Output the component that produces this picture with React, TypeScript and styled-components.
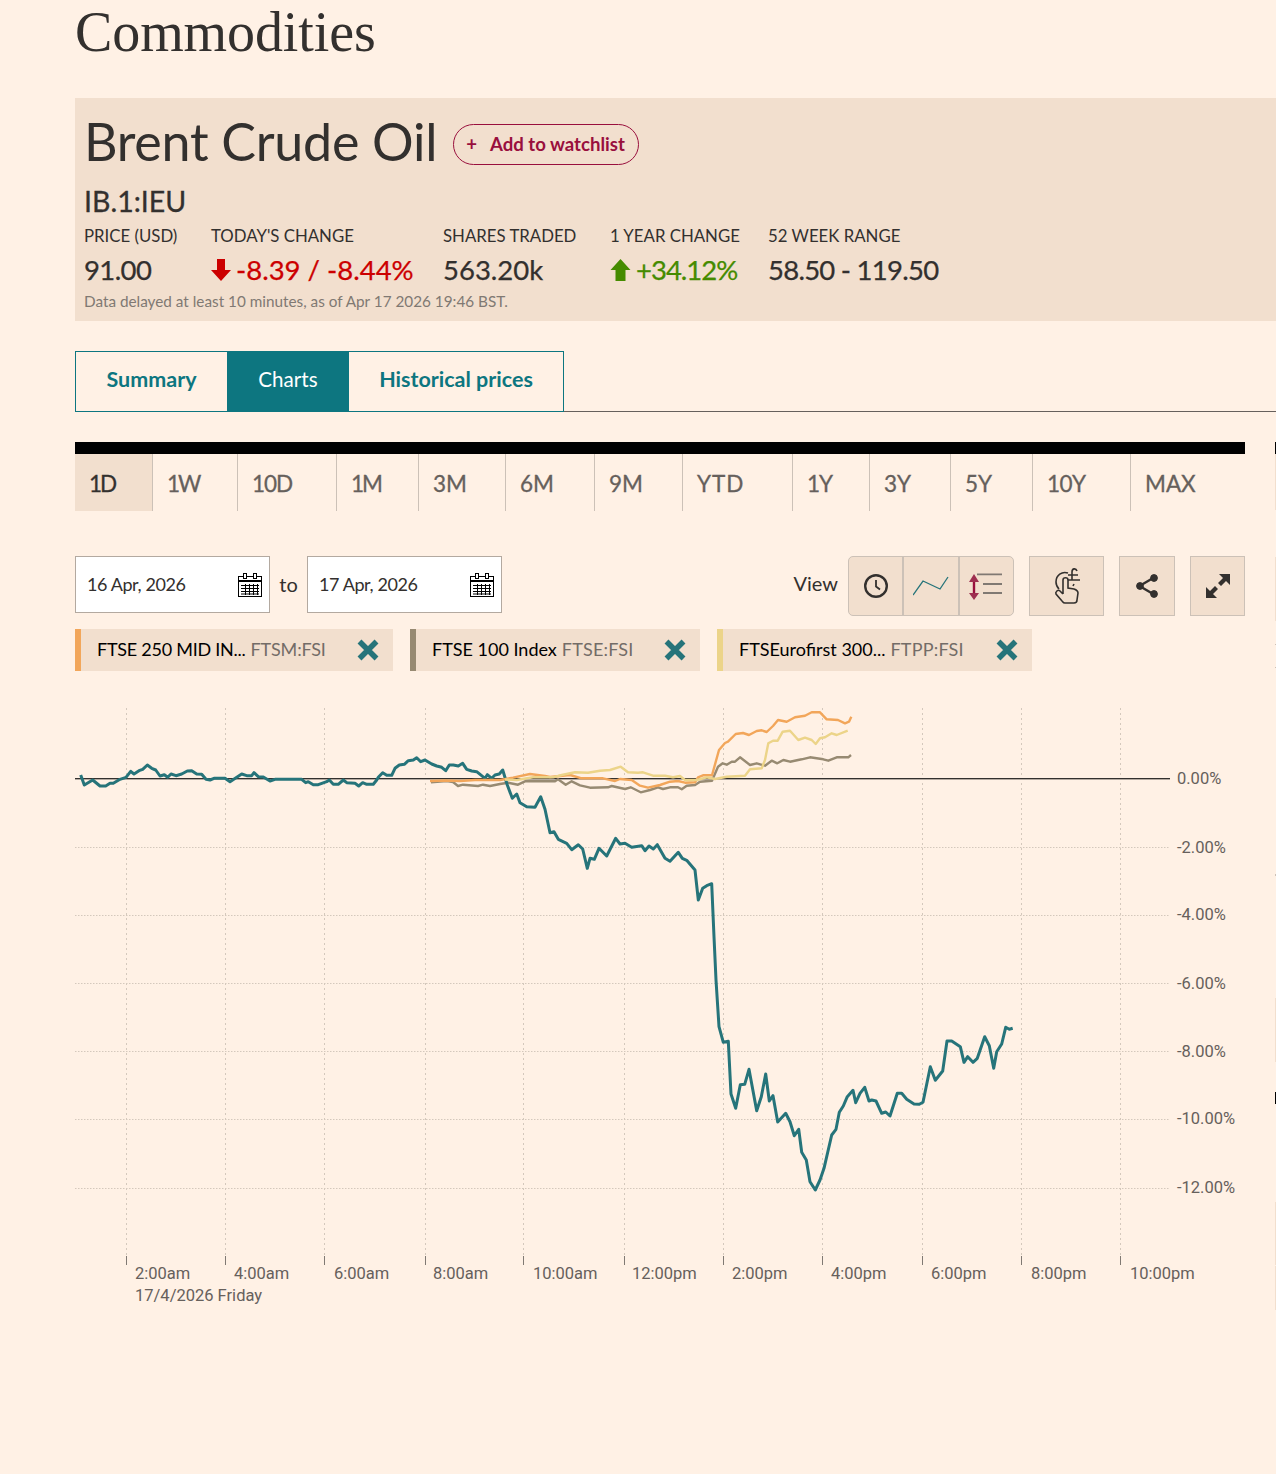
import React from 'react';
import styled, { createGlobalStyle } from 'styled-components';

const GlobalStyle = createGlobalStyle`
  html, body { margin: 0; padding: 0; background: #fff1e5; }
  body { font-family: "Lato", "Open Sans", sans-serif; color: #33302e; overflow-x: hidden; }
`;

const Page = styled.div`
  position: relative;
  width: 1276px;
  height: 1474px;
  overflow: hidden;
  box-sizing: border-box;
  padding-left: 75px;
`;

const Sliver = styled.div<{ $top: number; $height: number; $color: string }>`
  position: absolute;
  right: 0;
  width: 1px;
  top: ${p => p.$top}px;
  height: ${p => p.$height}px;
  background: ${p => p.$color};
`;

const PageTitle = styled.h1`
  margin: 0;
  height: 98px;
  font-family: "Liberation Serif", serif;
  font-weight: 400;
  font-size: 56px;
  letter-spacing: -0.1px;
  line-height: 64px;
  color: #33302e;
`;

const QuoteHeader = styled.section`
  height: 223px;
  background: #f2dfce;
  box-sizing: border-box;
  padding: 14px 0 0 9px;
`;

const NameRow = styled.div`
  display: flex;
  align-items: center;
  gap: 16px;
  height: 60px;
`;

const Name = styled.h2`
  margin: -2px 0 0;
  font-family: "Lato", sans-serif;
  font-weight: 400;
  font-size: 52px;
  letter-spacing: -0.27px;
  line-height: 60px;
`;

const Watchlist = styled.button`
  height: 41px;
  width: 186px;
  margin-top: 4px;
  box-sizing: border-box;
  border: 1px solid #990f3d;
  border-radius: 21px;
  background: transparent;
  color: #990f3d;
  font-family: "Lato", sans-serif;
  font-weight: 700;
  font-size: 18.6px;
  padding: 0 12px;
  display: flex;
  align-items: center;
  gap: 13px;
  white-space: nowrap;
`;

const Symbol = styled.div`
  font-size: 28.5px;
  line-height: 36px;
  margin-top: 11px;
  -webkit-text-stroke: 0.3px #33302e;
`;

const Stats = styled.div`
  display: flex;
  margin-top: 5px;
`;

const Stat = styled.div<{ $width: number }>`
  width: ${p => p.$width}px;
  flex: none;
`;

const StatLabel = styled.div`
  font-size: 16.8px;
  line-height: 24px;
  white-space: nowrap;
`;

const StatValue = styled.div<{ $tone?: string; $track?: number }>`
  font-size: 27.5px;
  letter-spacing: ${p => p.$track ?? 0}px;
  line-height: 34px;
  margin-top: 5px;
  color: ${p => p.$tone || '#33302e'};
  -webkit-text-stroke: 0.25px ${p => p.$tone || '#33302e'};
  display: flex;
  align-items: center;
  gap: 5px;
  white-space: nowrap;
`;

const Delay = styled.div`
  font-size: 15.3px;
  line-height: 18px;
  color: #807973;
  margin-top: 5px;
`;

const Tabs = styled.div`
  margin-top: 30px;
  height: 61px;
  box-sizing: border-box;
  display: flex;
  border-bottom: 1px solid #66605c;
`;

const Tab = styled.div<{ $active?: boolean; $width: number }>`
  width: ${p => p.$width}px;
  height: 61px;
  box-sizing: border-box;
  padding-bottom: 5px;
  display: flex;
  align-items: center;
  justify-content: center;
  font-size: ${p => (p.$active ? 20.6 : 21.5)}px;
  font-weight: ${p => (p.$active ? 400 : 700)};
  color: ${p => (p.$active ? '#fff' : '#0d7680')};
  background: ${p => (p.$active ? '#0d7680' : 'transparent')};
  border: 1px solid #0d7680;
  border-left-width: ${p => (p.$active ? 0 : 1)}px;
  border-right-width: ${p => (p.$active ? 0 : 1)}px;
  &:first-child { border-right-width: 0; }
  &:last-child { border-left-width: 0; }
`;

const Periods = styled.div`
  margin-top: 30px;
  width: 1170px;
  border-top: 12px solid #000;
  display: flex;
  height: 69px;
  box-sizing: border-box;
`;

const Period = styled.div<{ $active?: boolean; $width: number; $track: number }>`
  width: ${p => p.$width}px;
  height: 57px;
  box-sizing: border-box;
  padding: 2px 0 0 14px;
  display: flex;
  align-items: center;
  font-size: 22.5px;
  letter-spacing: ${p => p.$track}px;
  -webkit-text-stroke: 0.3px ${p => (p.$active ? '#33302e' : '#66605c')};
  color: ${p => (p.$active ? '#33302e' : '#66605c')};
  background: ${p => (p.$active ? '#f2dfce' : 'transparent')};
  border-right: 1px solid #ccc1b7;
  &:last-child { border-right: none; }
`;

const Toolbar = styled.div`
  margin-top: 45px;
  width: 1170px;
  height: 60px;
  display: flex;
  align-items: flex-start;
`;

const DateBox = styled.div`
  width: 195px;
  height: 57px;
  box-sizing: border-box;
  background: #fff;
  border: 1px solid #b3a9a0;
  padding: 0 7px 0 11px;
  display: flex;
  align-items: center;
  justify-content: space-between;
  font-size: 18px;
  letter-spacing: -0.4px;
`;

const DateText = styled.span`
  padding-bottom: 2px;
`;

const To = styled.span`
  width: 37px;
  height: 57px;
  display: flex;
  align-items: center;
  justify-content: center;
  font-size: 20px;
  padding-bottom: 2px;
  box-sizing: border-box;
`;

const ViewLabel = styled.span`
  margin-left: auto;
  margin-right: 10px;
  height: 57px;
  box-sizing: border-box;
  padding-bottom: 3px;
  display: flex;
  align-items: center;
  font-size: 20px;
`;

const ViewGroup = styled.div`
  display: flex;
  width: 166px;
  height: 60px;
  box-sizing: border-box;
  background: #f2dfce;
  border: 1px solid #ccc1b7;
  border-radius: 5px;
  margin-right: 15px;
`;

const ViewButton = styled.div`
  flex: 1;
  display: flex;
  align-items: center;
  justify-content: center;
  & + & { border-left: 2px solid #ccc1b7; }
`;

const ToolButton = styled.div<{ $width: number; $gap: number }>`
  width: ${p => p.$width}px;
  height: 60px;
  box-sizing: border-box;
  margin-right: ${p => p.$gap}px;
  background: #f2dfce;
  border: 1px solid #ccc1b7;
  display: flex;
  align-items: center;
  justify-content: center;
`;

const Chips = styled.div`
  display: flex;
  gap: 17px;
  margin-top: 13px;
`;

const Chip = styled.div<{ $color: string; $width: number }>`
  width: ${p => p.$width}px;
  height: 42px;
  box-sizing: border-box;
  background: #f2dfce;
  border-left: 6px solid ${p => p.$color};
  padding: 0 14px 0 16px;
  display: flex;
  align-items: center;
  font-size: 18px;
  color: #000;
  white-space: nowrap;
`;

const ChipName = styled.span<{ $track?: number }>`
  padding-bottom: 2px;
  letter-spacing: ${p => p.$track ?? 0}px;
`;

const ChipSymbol = styled.span<{ $track?: number }>`
  color: #736c67;
  margin-left: 5px;
  letter-spacing: ${p => p.$track ?? 0.2}px;
  padding-bottom: 2px;
`;

const ChipClose = styled.span`
  margin-left: auto;
  display: flex;
`;

const ChartSvg = styled.svg`
  display: block;
  margin: 0 0 0 -75px;
`;

const AxisText = styled.text`
  font-family: "Roboto", sans-serif;
  font-size: 16.5px;
  fill: #66605c;
`;

const teal = '80.7,775 84.3,785 92.7,780 100,786 105.7,786 110,783.3 113.3,783.3 120,779.3 126,777.3 130.7,771.3 134,774 139,770.7 142.7,769.3 147.3,765 151.7,768.3 155.7,770 160,776 164.3,774.7 167.7,777.3 171,774 176,775.7 181.7,774 187.3,771 191.7,770.7 196.7,774 201.7,774.3 206,779.3 210,780 214,778.3 225,778.3 230,781.7 241.7,774 246.7,775.7 251.7,775.7 254,772.7 258.3,776.7 263.3,777 270,781 275,779.3 301.7,779.3 305.7,782.7 308.3,781.7 313.3,784.7 318.3,784.7 326.7,781.7 329.3,780 333.3,784.3 338.3,784.3 343.3,780 346.7,782.7 355,783.3 358.7,786 362.7,782.7 366.7,784.3 373.3,784.3 376.7,780 378.3,777.3 382.7,772.7 386.7,775.3 391.7,775.3 395,768.3 399.3,765 404.3,764.3 408.3,760.7 413.3,760 416.7,757.7 420.7,761.7 425,760 431.7,764 436.7,766 441.7,767.3 445.7,770.7 449.3,765 453.3,765 458.3,766 462.7,763.3 466.7,769.3 471.7,771 476.7,771.7 485,778.3 487.3,774.7 491.7,778.3 495,775 499.3,774 502.7,770 507.3,785 512.3,798.3 516.7,794 520,802.7 526.7,806.7 535,807.3 540.7,796.7 545,809.3 550,832.7 554,831.7 558.3,839.3 566.7,843.3 571.7,849.7 578.3,844.7 582.7,849 587.3,868.3 590,858.3 594.3,859.3 599,848.3 606.7,856 615.7,838.3 620,844 625,843.3 631.7,847.3 641.7,845.7 645,850.7 649,846 653.3,849 657.3,844.7 665,858.3 670,861.3 678.3,852.3 682.3,858.3 686.7,860.3 695,870 698.3,900 702.7,888.3 706.7,885.7 711.7,883.7 714,936.7 716,980 719,1026.7 723.3,1042.3 728.3,1041.3 731,1094 735.7,1108.3 740.3,1084.7 744.7,1084.3 749,1069.3 756.7,1110.7 761.3,1096.7 765.7,1074 769.3,1101 773,1095.7 777.7,1122 785.7,1113.3 790,1121.7 794.3,1135.7 798.7,1129.3 801.7,1152.3 806.3,1160 810,1181.7 815.3,1190 820,1180 824,1168.3 831.7,1135 836,1129.3 839.3,1112.3 843.3,1106 847.3,1096.7 853,1090.3 855.7,1102.7 860,1093.3 864.7,1087.3 869,1101 871.7,1100 876,1101 881.7,1113.3 885.7,1112 890,1116 897.3,1093.3 901.7,1093.3 906.7,1099.3 914,1104 919.3,1104.3 923,1102.3 930.3,1066.7 935.3,1080.3 942.7,1071 947,1041 951.7,1041 960.3,1046.7 964,1062.3 967.7,1056.7 973,1062.3 977.3,1058.3 984.7,1036.7 989.3,1045.7 993.7,1068.3 996.7,1051.7 1001.7,1044 1005.7,1027.3 1009.3,1029.3 1012.7,1028.3';

const orange = '430,781 445,780.5 460,781 475,780 490,780 500,780 513,777.7 530,774 545,776 550,777 570,775 581.7,778.3 603,778.3 615,781 620,779 631.7,780 640,785.7 648,787.7 660,785 670,781.7 678,781 685,782.7 695,782.3 698,777.3 703,775.3 712,775.3 719,750 725,743 728,741.7 735.7,734 743,733 749,735 756.7,731 761.7,730.3 766.7,732 773,726 778,720 786.7,721.7 795,717.3 805,715.7 811.7,712.3 820,712.3 826.7,719.3 838,720 845,723.3 849,721.7 851.3,716.7';

const yellow = '505,779.5 516.7,780 533,777.3 553,777.3 561.7,775 575,772.3 588,772.7 600,770.7 610,770 620.7,766.7 628,772.3 638,772.7 643,772.3 653,775.7 665,775.7 673,777.3 680,776 685,780 696.7,780 706.7,777.3 715,779 726.7,776.7 745,775.7 750,769.3 761.7,768.3 765,760 768.3,743.3 773,740.7 777.7,740.7 782.7,731.7 790,730.7 798.3,740 805,737.7 811.7,740 815.7,744 820,738.3 825,737.3 831.7,733.3 836.7,735 847.7,730.7';

const brown = '431,782.3 446.7,781 453,782 458,786 463,784.7 478,786 483,784.7 490,786 500,784 508,782.7 518,784.7 525,781.3 555,781.3 558,779.3 565.7,784.7 571.7,781.3 580,785.3 590,787.7 608,787.3 611.7,786 625,789 630.7,787.3 640.7,792.3 650,790 658,787.3 663,789 670,787.3 678,787.3 681.7,789.3 686.7,785.7 695,785 700,781.7 712,780.7 718,766.7 722.7,763.3 726.7,764.7 731.7,761.7 735,761.7 740,757.3 750,765 756.7,763.3 765,765.7 771.7,760.7 777.3,763.3 783.3,760 790,761.7 801.7,759.3 810,757.3 823.3,759.3 828.3,760.7 836.7,757.3 848.3,757.3 851,755';

const gridX = [126.5, 225.5, 324.5, 425.5, 523.5, 624.5, 723.5, 822.5, 922.5, 1021.5, 1120.5];
const timeLabels: [string, number][] = [
  ['2:00am', 135], ['4:00am', 234], ['6:00am', 334], ['8:00am', 433], ['10:00am', 533], ['12:00pm', 632],
  ['2:00pm', 732], ['4:00pm', 831], ['6:00pm', 931], ['8:00pm', 1031], ['10:00pm', 1130],
];
const gridY: [number, string, number][] = [
  [847.5, '-2.00%', 853],
  [915.5, '-4.00%', 920],
  [983.5, '-6.00%', 989],
  [1051.5, '-8.00%', 1057],
  [1119.5, '-10.00%', 1124],
  [1188.5, '-12.00%', 1193],
];

const periods: [string, number, number][] = [
  ['1D', 78, -2], ['1W', 85, -2], ['10D', 99, -1], ['1M', 82, -2], ['3M', 87, 0], ['6M', 89, 0], ['9M', 88, 0],
  ['YTD', 110, 1], ['1Y', 77, -1], ['3Y', 81, 0], ['5Y', 82, 0], ['10Y', 98, -0.5], ['MAX', 114, 0],
];

const slivers: [number, number, string][] = [
  [442, 12, '#000'],
  [454, 56, '#f2dfce'],
  [557, 64, '#f2dfce'],
  [644, 1, '#ccc1b7'],
  [667, 1, '#ccc1b7'],
  [874, 2, '#ccc1b7'],
  [998, 64, '#f2dfce'],
  [1092, 12, '#000'],
  [1202, 63, '#f2dfce'],
  [1266, 44, '#f2dfce'],
];

const CalendarIcon = () => (
  <svg width="24" height="24" viewBox="0 0 24 24" fill="none" stroke="#000" strokeWidth="1">
    <rect x="0.5" y="3.5" width="23" height="20" fill="#fff" />
    <path d="M1 8h22" strokeWidth="2" />
    <path d="M3 12.5h18M3 15.5h18M3 18.5h18M3 21h18M7.5 11v11M11.5 11v11M15.5 11v11M19.5 11v11" />
    <rect x="5.5" y="0.5" width="3" height="5" fill="#fff" />
    <rect x="15.5" y="0.5" width="3" height="5" fill="#fff" />
  </svg>
);

const CloseIcon = () => (
  <svg width="22" height="22" viewBox="0 0 22 22">
    <path d="M2.5 2.5l17 17M19.5 2.5l-17 17" stroke="#26747a" strokeWidth="5.5" />
  </svg>
);

const DownArrow = () => (
  <svg width="20" height="24" viewBox="0 0 20 24">
    <path d="M6 1h8v11h6L10 23 0 12h6z" fill="#cc0000" />
  </svg>
);

const UpArrow = () => (
  <svg width="21" height="24" viewBox="0 0 20 24">
    <path d="M10 1l10 11h-5v11H5V12H0z" fill="#458b00" />
  </svg>
);

export default function App() {
  return (
    <Page>
      <GlobalStyle />
      {slivers.map(([top, height, color]) => (
        <Sliver key={top} $top={top} $height={height} $color={color} />
      ))}
      <PageTitle>Commodities</PageTitle>
      <QuoteHeader>
        <NameRow>
          <Name>Brent Crude Oil</Name>
          <Watchlist>
            <span>+</span>
            <span>Add to watchlist</span>
          </Watchlist>
        </NameRow>
        <Symbol>IB.1:IEU</Symbol>
        <Stats>
          <Stat $width={127}>
            <StatLabel>PRICE (USD)</StatLabel>
            <StatValue $track={-0.6}>91.00</StatValue>
          </Stat>
          <Stat $width={232}>
            <StatLabel>TODAY'S CHANGE</StatLabel>
            <StatValue $tone="#cc0000" $track={0}><DownArrow />-8.39 / -8.44%</StatValue>
          </Stat>
          <Stat $width={167}>
            <StatLabel>SHARES TRADED</StatLabel>
            <StatValue>563.20k</StatValue>
          </Stat>
          <Stat $width={158}>
            <StatLabel>1 YEAR CHANGE</StatLabel>
            <StatValue $tone="#458b00" $track={-1}><UpArrow />+34.12%</StatValue>
          </Stat>
          <Stat $width={200}>
            <StatLabel>52 WEEK RANGE</StatLabel>
            <StatValue $track={-0.75}>58.50 - 119.50</StatValue>
          </Stat>
        </Stats>
        <Delay>Data delayed at least 10 minutes, as of Apr 17 2026 19:46 BST.</Delay>
      </QuoteHeader>

      <Tabs>
        <Tab $width={152}>Summary</Tab>
        <Tab $width={122} $active>Charts</Tab>
        <Tab $width={215}>Historical prices</Tab>
      </Tabs>

      <Periods>
        {periods.map(([label, width, track], i) => (
          <Period key={label} $width={width} $track={track} $active={i === 0}>{label}</Period>
        ))}
      </Periods>

      <Toolbar>
        <DateBox><DateText>16 Apr, 2026</DateText> <CalendarIcon /></DateBox>
        <To>to</To>
        <DateBox><DateText>17 Apr, 2026</DateText> <CalendarIcon /></DateBox>
        <ViewLabel>View</ViewLabel>
        <ViewGroup>
          <ViewButton>
            <svg width="26" height="26" viewBox="0 0 26 26" fill="none" stroke="#33302e">
              <circle cx="13" cy="13" r="10.8" strokeWidth="2.4" />
              <path d="M13 7v6.5l4 3" strokeWidth="1.8" />
            </svg>
          </ViewButton>
          <ViewButton>
            <svg width="36" height="20" viewBox="0 0 36 20" fill="none" stroke="#26747a" strokeWidth="1.3">
              <path d="M0 19L10 5l17 8L35 1" />
            </svg>
          </ViewButton>
          <ViewButton>
            <svg width="34" height="30" viewBox="0 0 34 30" fill="none">
              <path d="M5 6v20" stroke="#990f3d" strokeWidth="2.4" />
              <path d="M0 11l5-8 5 8zM0 22l5 7 5-7z" fill="#9e2f50" />
              <path d="M8 3.3h25M14 13h19M14 22h19" stroke="#807973" strokeWidth="1.8" />
            </svg>
          </ViewButton>
        </ViewGroup>
        <ToolButton $width={75} $gap={15}>
          <svg width="26" height="36" viewBox="0 0 26 36" fill="none" stroke="#33302e" strokeWidth="1.6">
            <path d="M14 5C8 3 2 7 2 14c0 3 1 5 3 7" />
            <path d="M9 26V12c0-3 5-3 5 0v8l6 1c3 1 4 2 4 4l-1 7c0 2-1 3-3 3h-9c-2 0-2-1-3-2l-6-7c-1-2 2-5 4-3l3 3" />
            <path d="M23 3c-1-3-5-3-5 1v8M14 7h10M14 12h12M20 16l-1 2" />
          </svg>
        </ToolButton>
        <ToolButton $width={56} $gap={15}>
          <svg width="24" height="26" viewBox="0 0 24 26" fill="#33302e" stroke="#33302e">
            <path d="M4.5 13L19 4.5M4.5 13L19 21.5" strokeWidth="2.5" fill="none" />
            <circle cx="5" cy="13" r="3.4" />
            <circle cx="19" cy="5" r="3.4" />
            <circle cx="19" cy="21" r="3.4" />
          </svg>
        </ToolButton>
        <ToolButton $width={55} $gap={0}>
          <svg width="24" height="24" viewBox="0 0 24 24" fill="#33302e">
            <path d="M13 0h11v11l-4-4-5 5-3-3 5-5zM11 24H0V13l4 4 5-5 3 3-5 5z" />
          </svg>
        </ToolButton>
      </Toolbar>

      <Chips>
        <Chip $color="#f2a65a" $width={318}><ChipName $track={-0.25}>FTSE 250 MID IN...</ChipName><ChipSymbol $track={-0.15}>FTSM:FSI</ChipSymbol><ChipClose><CloseIcon /></ChipClose></Chip>
        <Chip $color="#978a72" $width={290}><ChipName>FTSE 100 Index</ChipName><ChipSymbol>FTSE:FSI</ChipSymbol><ChipClose><CloseIcon /></ChipClose></Chip>
        <Chip $color="#ecd489" $width={315}><ChipName>FTSEurofirst 300...</ChipName><ChipSymbol>FTPP:FSI</ChipSymbol><ChipClose><CloseIcon /></ChipClose></Chip>
      </Chips>

      <ChartSvg width="1276" height="803" viewBox="0 671 1276 803">
        {gridX.map(x => (
          <line key={x} x1={x} x2={x} y1={708} y2={1255} stroke="#d4c8bc" strokeDasharray="2 3" />
        ))}
        {gridY.map(([y, label, textY]) => (
          <g key={y}>
            <line x1={75} x2={1169} y1={y} y2={y} stroke="#d4c8bc" strokeDasharray="1.5 1.5" />
            <AxisText x={1177} y={textY}>{label}</AxisText>
          </g>
        ))}
        <AxisText x={1177} y={784}>0.00%</AxisText>
        {gridX.map(x => (
          <line key={x} x1={x} x2={x} y1={1256} y2={1265} stroke="#807973" />
        ))}
        {timeLabels.map(([label, x]) => (
          <AxisText key={label} x={x} y={1279}>{label}</AxisText>
        ))}
        <AxisText x={135} y={1301}>17/4/2026 Friday</AxisText>
        <line x1={75} x2={1170} y1={779.5} y2={779.5} stroke="#b3a9a0" />
        <line x1={75} x2={1170} y1={778.5} y2={778.5} stroke="#33302e" />
        <polyline points={brown} fill="none" stroke="#978a72" strokeWidth="2.4" strokeLinejoin="round" />
        <polyline points={teal} fill="none" stroke="#26747a" strokeWidth="3" strokeLinejoin="round" />
        <polyline points={orange} fill="none" stroke="#f2a65a" strokeWidth="2.4" strokeLinejoin="round" />
        <polyline points={yellow} fill="none" stroke="#ecd489" strokeWidth="2.4" strokeLinejoin="round" />
      </ChartSvg>
    </Page>
  );
}
